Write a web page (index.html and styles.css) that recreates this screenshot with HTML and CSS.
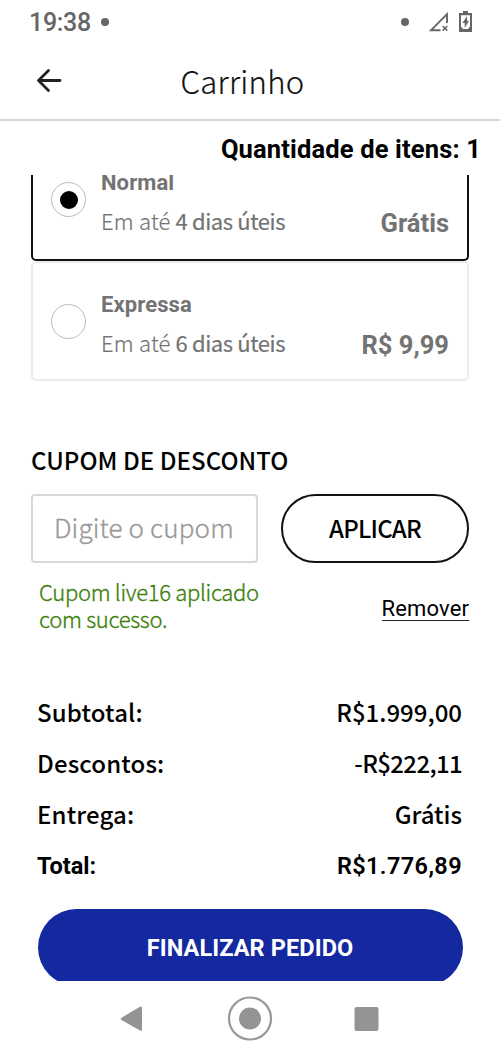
FILE: index.html
```html
<!DOCTYPE html>
<html lang="pt-BR">
<head>
<meta charset="utf-8">
<title>Carrinho</title>
<link rel="stylesheet" href="styles.css">
</head>
<body>
<div class="status">
  <span class="clock">19:38</span><span class="dot"></span>
  <span class="dot dot-right"></span>
  <svg class="signal" width="20" height="20" viewBox="0 0 20 20"><path d="M11.500 18.200H2.200L18 2.200V11" fill="none" stroke="#666" stroke-width="1.900"/><path d="M13.700 14l4.600 4.600M18.300 14l-4.600 4.600" stroke="#666" stroke-width="1.500"/></svg>
  <svg class="battery" width="13" height="21" viewBox="0 0 13 21"><path d="M4 0h5v2h4v19H0V2h4z" fill="#666"/><path d="M2 4.200h9v11.200l-2 2.600H4l-2-2.600z" fill="#fff"/><path d="M8 5.200L3.300 12h2.400v5L10 9.800H8z" fill="#666"/></svg>
</div>
<header class="header">
  <svg class="back" width="26" height="26" viewBox="0 0 26 26"><path d="M24 12.500H3M12.500 2.500L2.500 12.500l10 10" fill="none" stroke="#222" stroke-width="2.800" stroke-linecap="round" stroke-linejoin="round"/></svg>
  <h1 class="title">Carrinho</h1>
</header>
<div class="quantity"><span>Quantidade de itens: 1</span></div>
<main class="content">
  <section class="option selected">
    <span class="radio"></span>
    <div class="details"><b class="name">Normal</b><div class="eta"><span class="light">Em até</span> <span class="days">4 dias úteis</span></div></div>
    <b class="price">Grátis</b>
  </section>
  <section class="option">
    <span class="radio"></span>
    <div class="details"><b class="name">Expressa</b><div class="eta"><span class="light">Em até</span> <span class="days">6 dias úteis</span></div></div>
    <b class="price">R$ 9,99</b>
  </section>
  <h2 class="coupon-title">CUPOM DE DESCONTO</h2>
  <div class="coupon-form">
    <div class="field">Digite o cupom</div>
    <div class="apply">APLICAR</div>
  </div>
  <div class="coupon-status">
    <p class="message">Cupom live16 aplicado<br>com sucesso.</p>
    <a class="remove">Remover</a>
  </div>
  <dl class="summary">
    <div class="row"><dt>Subtotal:</dt><dd>R$1.999,00</dd></div>
    <div class="row"><dt>Descontos:</dt><dd class="discount">-R$222,11</dd></div>
    <div class="row"><dt>Entrega:</dt><dd>Grátis</dd></div>
    <div class="row total"><dt>Total:</dt><dd>R$1.776,89</dd></div>
  </dl>
  <div class="checkout">FINALIZAR PEDIDO</div>
</main>
<nav class="nav">
  <svg width="268" height="46" viewBox="0 0 268 46"><path d="M5.500 21.700L24 10.700Q26 10 26 12V33.500Q26 35.500 24 34.500L5.500 24Q4 22.800 5.500 21.700z" fill="#949494"/><circle cx="134" cy="22.500" r="21" fill="none" stroke="#999" stroke-width="2.200"/><circle cx="134" cy="22.500" r="11" fill="#949494"/><rect x="238.500" y="11" width="24" height="24" rx="2" fill="#949494"/></svg>
</nav>
</body>
</html>
```
FILE: styles.css
```css
* { box-sizing: border-box; }
body { margin: 0; width: 500px; height: 1056px; overflow: hidden; background: #fff; color: #000; font-family: "Noto Sans CJK SC", "Noto Sans", sans-serif; display: flex; flex-direction: column; white-space: nowrap; }
h1, h2, p, dl, dd { margin: 0; font-weight: 400; }
.status { height: 44px; display: flex; align-items: center; padding-left: 29px; font-family: Roboto, sans-serif; color: #666; }
.clock { font-size: 25px; font-weight: 500; line-height: 44px; width: 62px; padding-top: 2px; letter-spacing: -0.3px; }
.dot { width: 8px; height: 8px; border-radius: 50%; background: #666; margin-left: 10px; }
.dot-right { margin-left: 292px; }
.signal { margin-left: 20px; }
.battery { margin-left: 10px; margin-top: -1px; }
.header { height: 77px; border-bottom: 2px solid #d8d8d8; display: flex; padding-left: 36px; }
.back { margin-top: 24px; }
.title { margin-left: 118.500px; font-size: 31px; line-height: 74px; font-weight: 300; color: #111; letter-spacing: 0.3px; -webkit-text-stroke: 0.2px; }
.quantity { height: 54px; padding-right: 19px; text-align: right; font: 700 25.500px/56px Roboto, sans-serif; letter-spacing: 0.15px; }
.content { height: 806px; overflow: hidden; padding: 0 31px; }
.option { height: 120px; width: 438px; border: 2px solid #ebebeb; border-radius: 5px; display: flex; padding: 0 18px; color: #737373; }
.option.selected { height: 86px; border: 2px solid #111; border-top: 0; border-radius: 0 0 5px 5px; }
.radio { width: 35px; height: 35px; border: 1.500px solid #bcbcbc; border-radius: 50%; margin-top: 41px; display: grid; place-items: center; }
.selected .radio { margin-top: 7px; }
.selected .radio::after { content: ""; width: 18px; height: 18px; border-radius: 50%; background: #000; }
.details { margin-left: 15px; padding-top: 27px; }
.selected .details { padding-top: 0; margin-top: -7px; }
.name { display: block; font: 700 22px/30px Roboto, sans-serif; letter-spacing: 0.1px; }
.eta { font-size: 22px; line-height: 32px; margin-top: 6px; }
.light { font-weight: 300; letter-spacing: 0.2px; -webkit-text-stroke: 0.2px; }
.days { font-weight: 400; letter-spacing: -0.4px; -webkit-text-stroke: 0.2px; }
.price { margin-left: auto; margin-top: 66px; font: 700 25.500px/32px Roboto, sans-serif; }
.selected .price { margin-top: 32px; }
.coupon-title { margin-top: 61px; font-size: 24px; line-height: 36px; font-weight: 500; letter-spacing: 0.06px; }
.coupon-form { display: flex; justify-content: space-between; margin-top: 16px; width: 438px; }
.field { width: 227px; height: 69px; border: 2px solid #d8d8d8; border-radius: 4px; padding-left: 21px; font-size: 26px; line-height: 62px; font-weight: 300; color: #999; letter-spacing: 0.15px; -webkit-text-stroke: 0.35px; }
.apply { width: 188px; height: 69px; border: 2px solid #111; border-radius: 35px; text-align: center; font-size: 24px; line-height: 63px; font-weight: 500; letter-spacing: -0.8px; }
.coupon-status { display: flex; justify-content: space-between; width: 438px; height: 71px; padding: 15px 0 0 8px; }
.message { font-size: 22px; line-height: 27px; font-weight: 300; color: #3c800a; letter-spacing: -0.3px; -webkit-text-stroke: 0.35px; }
.remove { margin-top: 16px; height: 27px; font: 400 22px/29px Roboto, sans-serif; letter-spacing: 0.12px; border-bottom: 1px solid #222; }
.summary { padding: 52px 7px 0 6px; font-size: 24px; font-weight: 500; }
.row { height: 51px; line-height: 51px; display: flex; justify-content: space-between; }
.row dt { letter-spacing: 0.15px; }
.row dd { font-weight: 500; }
.row .discount { letter-spacing: -0.65px; }
.row.total { font-family: Roboto, sans-serif; font-size: 23.500px; line-height: 54px; font-weight: 700; }
.row.total dt { letter-spacing: 0; }
.row.total dd { font-weight: 600; letter-spacing: 0.4px; }
.checkout { width: 425px; height: 77px; margin: 19px 0 0 6.500px; border-radius: 39px; background: #14289f; color: #fff; text-align: center; font: 700 23.500px/79px Roboto, sans-serif; letter-spacing: 0.1px; }
.nav { height: 75px; padding: 15px 116px; }
```
